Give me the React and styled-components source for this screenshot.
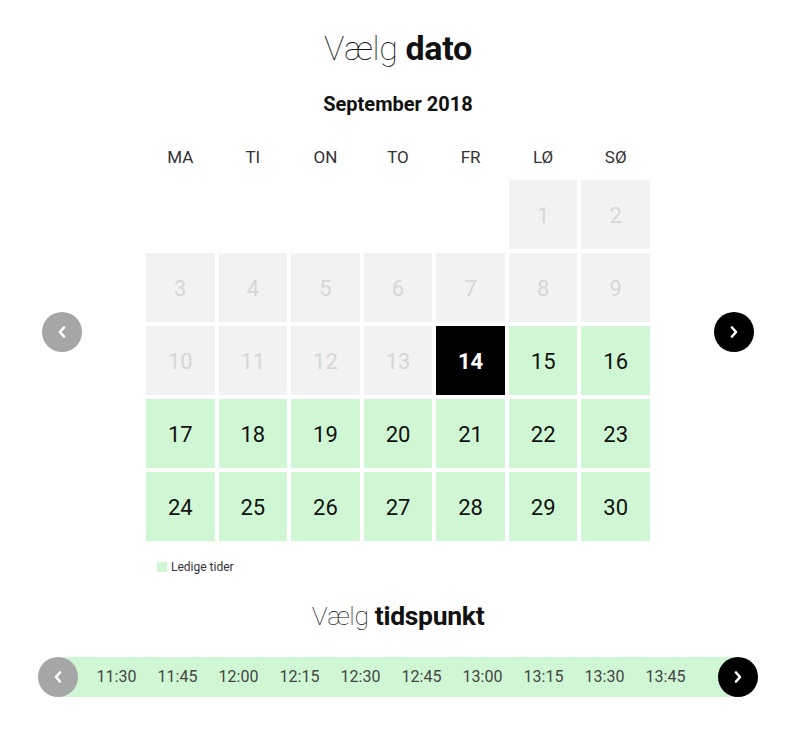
import React from 'react'
import styled, { createGlobalStyle } from 'styled-components'

const GlobalStyle = createGlobalStyle`
  body {
    margin: 0;
    background: #fff;
    font-family: Roboto, "Liberation Sans", sans-serif;
    color: #222;
  }
`

const weekdays = ['MA', 'TI', 'ON', 'TO', 'FR', 'LØ', 'SØ']
const times = ['11:30', '11:45', '12:00', '12:15', '12:30', '12:45', '13:00', '13:15', '13:30', '13:45']

// september 2018 starts on a saturday
const days = [
  ...Array(5).fill(null),
  ...Array.from({ length: 30 }, (_, i) => i + 1),
]

function dayState(d) {
  if (d === 14) return 'selected'
  if (d > 14) return 'free'
  return 'past'
}

function Chevron({ dir }) {
  return (
    <svg width="10" height="14" viewBox="0 0 10 14">
      <polyline
        points={dir === 'left' ? '7,2.5 3,7 7,11.5' : '3,2.5 7,7 3,11.5'}
        fill="none"
        stroke="#fff"
        strokeWidth="2.6"
        strokeLinecap="round"
        strokeLinejoin="round"
      />
    </svg>
  )
}

function App() {
  return (
    <Page>
      <GlobalStyle />
      <Title>
        Vælg <b>dato</b>
      </Title>
      <Month>September 2018</Month>
      <CalendarRow>
        <ArrowButton $dark={false} $top={167}>
          <Chevron dir="left" />
        </ArrowButton>
        <Calendar>
          <Weekdays>
            {weekdays.map(w => (
              <Weekday key={w}>{w}</Weekday>
            ))}
          </Weekdays>
          <Grid>
            {days.map((d, i) =>
              d === null ? <Empty key={i} /> : <Day key={i} $state={dayState(d)}>{d}</Day>
            )}
          </Grid>
          <Legend>
            <Swatch />
            Ledige tider
          </Legend>
        </Calendar>
        <ArrowButton $dark $top={167}>
          <Chevron dir="right" />
        </ArrowButton>
      </CalendarRow>
      <SubTitle>
        Vælg <b>tidspunkt</b>
      </SubTitle>
      <TimeBar>
        <ArrowButton $dark={false}>
          <Chevron dir="left" />
        </ArrowButton>
        <TimeList>
          {times.map(t => (
            <Time key={t}>{t}</Time>
          ))}
        </TimeList>
        <ArrowButton $dark>
          <Chevron dir="right" />
        </ArrowButton>
      </TimeBar>
    </Page>
  )
}

export default App

const Page = styled.div`
  width: 796px;
  display: flex;
  flex-direction: column;
  align-items: center;
  padding-bottom: 30px;
`
const Title = styled.h1`
  margin: 28px 0 0 0;
  font-size: 34px;
  line-height: 40px;
  font-weight: 100;
  color: #111;
  letter-spacing: -0.3px;
  b {
    font-weight: 700;
  }
`
const Month = styled.h2`
  margin: 24px 0 0 0;
  font-size: 20px;
  line-height: 24px;
  font-weight: 700;
  color: #111;
`
const CalendarRow = styled.div`
  margin-top: 29px;
  display: flex;
  align-items: flex-start;
  gap: 64px;
`
const ArrowButton = styled.div`
  width: 40px;
  height: 40px;
  flex-shrink: 0;
  border-radius: 50%;
  background: ${p => (p.$dark ? '#000' : '#a6a6a6')};
  display: flex;
  align-items: center;
  justify-content: center;
  margin-top: ${p => (p.$top ? `${p.$top}px` : '0')};
  cursor: pointer;
`
const Calendar = styled.div`
  width: 504px;
`
const Weekdays = styled.div`
  display: grid;
  grid-template-columns: repeat(7, 1fr);
  gap: 4px;
  margin-bottom: 11px;
`
const Weekday = styled.div`
  text-align: center;
  font-size: 17px;
  line-height: 24px;
  color: #333;
`
const Grid = styled.div`
  display: grid;
  grid-template-columns: repeat(7, 1fr);
  grid-auto-rows: 68.5px;
  gap: 4.5px 4px;
`
const Empty = styled.div``
const Day = styled.div`
  display: flex;
  align-items: center;
  justify-content: center;
  padding-top: 3px;
  font-size: 22px;
  background: ${p =>
    p.$state === 'selected' ? '#000' : p.$state === 'free' ? '#d0f7d4' : '#f2f2f2'};
  color: ${p =>
    p.$state === 'selected' ? '#fff' : p.$state === 'free' ? '#111' : '#d6d6d6'};
  font-weight: ${p => (p.$state === 'selected' ? 700 : 400)};
  cursor: ${p => (p.$state === 'past' ? 'default' : 'pointer')};
`
const Legend = styled.div`
  margin-top: 19px;
  margin-left: 11px;
  display: flex;
  align-items: center;
  gap: 4px;
  font-size: 12px;
  line-height: 14px;
  color: #333;
`
const Swatch = styled.span`
  width: 10px;
  height: 10px;
  border-radius: 1px;
  background: #d0f7d4;
`
const SubTitle = styled.h2`
  margin: 27px 0 0 0;
  font-size: 26.5px;
  line-height: 30px;
  font-weight: 100;
  color: #111;
  letter-spacing: -0.3px;
  b {
    font-weight: 700;
  }
`
const TimeBar = styled.div`
  margin-top: 26px;
  width: 720px;
  height: 40px;
  display: flex;
  align-items: center;
  background: linear-gradient(
    to right,
    transparent 20px,
    #d0f7d4 20px,
    #d0f7d4 calc(100% - 20px),
    transparent calc(100% - 20px)
  );
`
const TimeList = styled.div`
  flex: 1;
  display: flex;
  padding-left: 8px;
  overflow: hidden;
`
const Time = styled.div`
  width: 61px;
  flex-shrink: 0;
  text-align: center;
  font-size: 16px;
  color: #444;
  cursor: pointer;
`
